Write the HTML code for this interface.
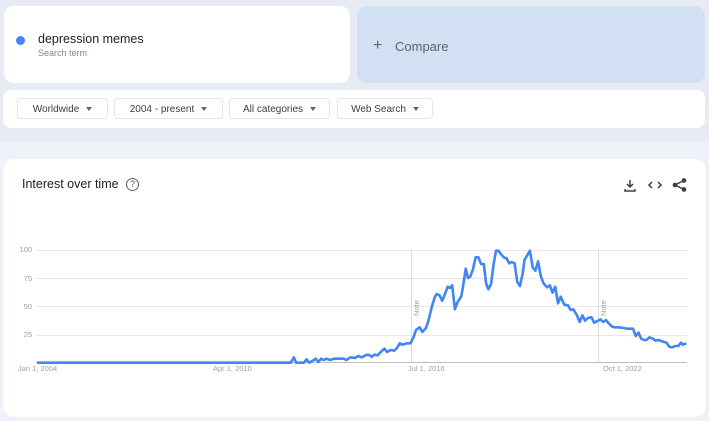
<!DOCTYPE html>
<html><head><style>
body{margin:0;width:709px;height:421px;background:#eef1f7;font-family:"Liberation Sans",sans-serif;position:relative;overflow:hidden}
.top{position:absolute;left:0;top:0;width:709px;height:142px;background:#e6ebf4}
.card{position:absolute;background:#fff;border-radius:10px}
.btn{position:absolute;top:98px;height:21px;border:1px solid #e3e6ea;border-radius:4px;font-size:10px;color:#3c4043;line-height:21px;text-align:center;box-sizing:border-box}
.btn:after{content:"";display:inline-block;margin-left:7px;border-left:3.5px solid transparent;border-right:3.5px solid transparent;border-top:4px solid #5f6368;vertical-align:middle}
.yl{position:absolute;font-size:7.5px;color:#9aa0a6;width:20px;text-align:right;left:12px}
.xl{position:absolute;top:364px;font-size:7.5px;color:#9aa0a6}
.g{position:absolute;left:36px;width:651px;height:1px;background:#e8e8e8}
</style></head><body>
<div class="top"></div>
<div class="card" style="left:4px;top:6px;width:346px;height:77px"></div>
<div style="position:absolute;left:16px;top:36px;width:9px;height:9px;border-radius:50%;background:#4285f4"></div>
<div style="position:absolute;left:38px;top:32px;font-size:12.5px;color:#202124">depression memes</div>
<div style="position:absolute;left:38px;top:48px;font-size:9px;color:#80868b">Search term</div>
<div style="position:absolute;left:357px;top:6px;width:348px;height:77px;background:#d2e0f3;border-radius:10px"></div>
<div style="position:absolute;left:373px;top:38px;font-size:16px;color:#5f6368;line-height:16px">+</div>
<div style="position:absolute;left:395px;top:39px;font-size:13px;color:#5f6368">Compare</div>
<div class="card" style="left:3px;top:90px;width:702px;height:38px;border-radius:8px"></div>
<div class="btn" style="left:17px;width:91px">Worldwide</div>
<div class="btn" style="left:114px;width:109px">2004 - present</div>
<div class="btn" style="left:229px;width:101px">All categories</div>
<div class="btn" style="left:337px;width:96px">Web Search</div>
<div class="card" style="left:3px;top:159px;width:703px;height:258px;border-radius:12px"></div>
<div style="position:absolute;left:22px;top:177px;font-size:12.5px;color:#202124">Interest over time</div>
<div style="position:absolute;left:126px;top:178px;width:11px;height:11px;border:1px solid #5f6368;border-radius:50%;font-size:9px;color:#5f6368;text-align:center;line-height:11px">?</div>
<svg style="position:absolute;left:622px;top:177px" width="70" height="16" viewBox="0 0 70 16" fill="none" stroke="#3c4043" stroke-width="1.5">
<path d="M8 3v7M5 7l3 3 3-3M3 12v2h10v-2"/>
<path d="M30 5l-3 3 3 3M36 5l3 3-3 3"/>
<circle cx="62" cy="3.5" r="1.6" fill="#3c4043"/><circle cx="53" cy="8" r="1.6" fill="#3c4043"/><circle cx="62" cy="12.5" r="1.6" fill="#3c4043"/><path d="M62 3.5L53 8L62 12.5"/>
</svg>
<div class="g" style="top:250px"></div><div class="g" style="top:278px"></div><div class="g" style="top:306px"></div><div class="g" style="top:335px"></div>
<div class="g" style="top:362px;background:#bdbdbd"></div>
<div style="position:absolute;left:411px;top:250px;width:1px;height:112px;background:#ddd"></div>
<div style="position:absolute;left:598px;top:250px;width:1px;height:112px;background:#ddd"></div>
<div style="position:absolute;left:412px;top:316px;font-size:7.5px;color:#9aa0a6;transform:rotate(-90deg);transform-origin:left top">Note</div>
<div style="position:absolute;left:599px;top:316px;font-size:7.5px;color:#9aa0a6;transform:rotate(-90deg);transform-origin:left top">Note</div>
<div class="yl" style="top:245px">100</div><div class="yl" style="top:274px">75</div><div class="yl" style="top:302px">50</div><div class="yl" style="top:330px">25</div>
<div class="xl" style="left:18px">Jan 1, 2004</div><div class="xl" style="left:213px">Apr 1, 2010</div><div class="xl" style="left:408px">Jul 1, 2016</div><div class="xl" style="left:603px">Oct 1, 2022</div>
<svg style="position:absolute;left:0;top:150px" width="709" height="271" viewBox="0 0 1568 813" preserveAspectRatio="none">
<polyline fill="none" stroke="#4285f4" stroke-width="2.6" vector-effect="non-scaling-stroke" stroke-linejoin="round" points="82,638 643,638 650,622 655,638 672,638 678,628 684,638 692,632 698,626 704,636 710,626 716,630 722,626 730,630 740,626 760,626 766,630 775,622 785,624 792,618 800,622 808,616 815,614 822,620 828,614 835,616 842,606 850,596 856,606 864,600 872,602 878,594 884,580 890,584 900,580 908,580 915,560 920,540 928,532 934,546 942,534 948,510 955,470 962,440 966,432 972,436 978,452 983,436 990,410 995,414 1000,406 1006,478 1012,456 1020,440 1024,410 1030,356 1035,384 1040,380 1046,358 1052,322 1058,322 1064,342 1070,342 1075,400 1080,418 1086,402 1092,340 1097,302 1102,302 1110,316 1116,324 1120,324 1126,340 1132,336 1138,340 1144,396 1150,408 1156,370 1160,330 1166,316 1172,302 1178,352 1184,362 1190,334 1196,378 1202,400 1210,412 1216,406 1222,428 1228,410 1234,460 1240,440 1248,464 1256,466 1262,480 1268,478 1276,496 1282,516 1288,496 1294,512 1300,504 1308,502 1314,518 1320,514 1328,508 1334,516 1340,510 1346,520 1354,530 1360,532 1368,532 1380,534 1386,536 1400,536 1406,558 1412,548 1418,566 1424,570 1430,570 1436,562 1444,566 1450,572 1456,570 1464,574 1474,578 1480,590 1486,592 1494,588 1500,588 1506,578 1510,584 1518,580"/>
</svg>
</body></html>
